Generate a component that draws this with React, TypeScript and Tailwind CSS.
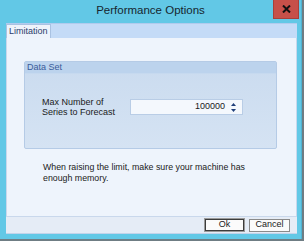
import React from "react";

const font = { fontFamily: '"Liberation Sans", Arial, sans-serif' };

function SpinArrows() {
	return (
		<div className="flex flex-col items-center gap-[3px] w-[8px]">
			<svg width="5" height="3" viewBox="0 0 5 3">
				<path d="M2.5 0 L5 3 L0 3 Z" fill="#1f3f7a" />
			</svg>
			<svg width="5" height="3" viewBox="0 0 5 3">
				<path d="M0 0 L5 0 L2.5 3 Z" fill="#1f3f7a" />
			</svg>
		</div>
	);
}

export default function App() {
	return (
		<div className="w-[304px] h-[241px] bg-[#6f7d84] overflow-hidden" style={font}>
			<div className="w-[302px] h-[239px] bg-[#62c8e6] flex flex-col pl-[6px] pr-[4px] pb-[5px] border-r border-[#4fb3d2]">
				{/* title bar */}
				<div className="relative h-[23px] flex items-center justify-center shrink-0">
					<span className="text-[11.5px] text-[#16262f] ml-[-2px] pb-[1px]">Performance Options</span>
					<div className="absolute right-[-2px] top-0 w-[26px] h-[19px] bg-[#c75049] border border-[#a8403a] border-t-0 flex items-center justify-center">
						<svg width="9" height="8" viewBox="0 0 9 8">
							<path d="M1 0.5 L8 7.5 M8 0.5 L1 7.5" stroke="#111" strokeWidth="2" />
						</svg>
					</div>
				</div>

				{/* client area */}
				<div className="flex-1 flex flex-col bg-[#e5ecf6]">
					{/* tab strip */}
					<div className="h-[15px] bg-[#c4dbf7] border-t border-[#b0cbee] flex items-end shrink-0">
						<div className="h-[14px] w-[45px] bg-[#eef3fb] border border-b-0 border-[#a9c2e2] flex items-center pl-[2px]">
							<span className="text-[9px] text-[#2b3d6b]">Limitation</span>
						</div>
					</div>

					{/* tab page */}
					<div className="h-[179px] bg-[#eef4fc] border-x border-b border-[#c9d8ec] pt-[23px] shrink-0">
						<div className="ml-[17px] w-[253px] h-[88px] border border-[#b5cbe6] rounded-[2px] flex flex-col bg-gradient-to-b from-[#cadbef] to-[#d5e3f3]">
							<div className="h-[12px] bg-[#bcd3ed] border-b border-[#c6d9ef] flex items-center pl-[2px]">
								<span className="text-[9px] text-[#3a5b9a]">Data Set</span>
							</div>
							<div className="flex items-center pl-[17px] pt-[23px]">
								<div className="w-[88px] text-[9px] leading-[10px] text-[#1a1a1a]">
									Max Number of
									<br />
									Series to Forecast
								</div>
								<div className="w-[113px] h-[16px] bg-[#f4f8fd] border border-[#b9cde6] flex items-center justify-end pr-[5px] gap-[4px]">
									<span className="text-[9px] text-[#1a1a1a]">100000</span>
									<SpinArrows />
								</div>
							</div>
						</div>

						<div className="ml-[36px] mt-[13px] text-[8.8px] leading-[10.5px] text-[#1a1a1a]">
							When raising the limit, make sure your machine has
							<br />
							enough memory.
						</div>
					</div>

					{/* button bar */}
					<div className="flex-1 flex items-center justify-end gap-[5px] pr-[7px] border-b border-[#c2d3ea]">
						<button className="w-[39px] h-[12px] bg-[#fbfbfb] border border-[#3c3c3c] outline outline-1 outline-[#9a9a9a] flex items-center justify-center text-[9px] text-[#1a1a1a]">
							Ok
						</button>
						<button className="w-[41px] h-[13px] bg-[#fbfbfb] border border-[#8a8a8a] flex items-center justify-center text-[9px] text-[#1a1a1a]">
							Cancel
						</button>
					</div>
				</div>
			</div>
		</div>
	);
}
